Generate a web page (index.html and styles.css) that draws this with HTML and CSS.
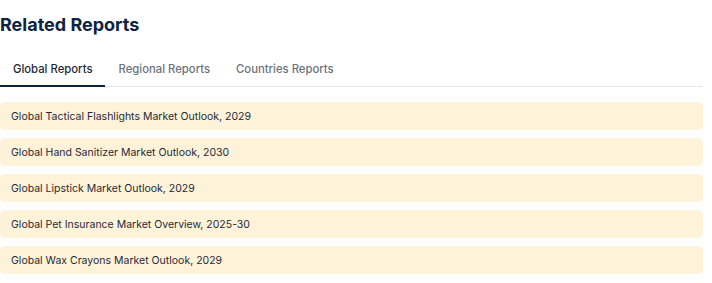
FILE: index.html
```html
<!DOCTYPE html>
<html>
<head>
  <link rel="stylesheet" href="styles.css">
</head>
<body>
  <section class="related">
    <h2 class="related-title">Related Reports</h2>
    <ul class="tabs">
      <li class="tab active">Global Reports</li>
      <li class="tab">Regional Reports</li>
      <li class="tab">Countries Reports</li>
    </ul>
    <ul class="report-list">
      <li class="report">Global Tactical Flashlights Market Outlook, 2029</li>
      <li class="report">Global Hand Sanitizer Market Outlook, 2030</li>
      <li class="report">Global Lipstick Market Outlook, 2029</li>
      <li class="report">Global Pet Insurance Market Overview, 2025-30</li>
      <li class="report">Global Wax Crayons Market Outlook, 2029</li>
    </ul>
  </section>
</body>
</html>
```

FILE: styles.css
```css
body {
  margin: 0;
  background-color: #ffffff;
  font-family: Inter, "Noto Sans", sans-serif;
}

.related {
  width: 703px;
}

.related-title {
  margin: 0;
  padding-top: 14px;
  font-size: 18px;
  line-height: 22px;
  font-weight: 700;
  color: #0d2340;
}

.tabs {
  list-style-type: none;
  margin: 16px 0 0;
  padding: 0;
  display: flex;
  border-bottom: 1px solid #e5e7eb;
}

.tab {
  padding: 8px 13px 7px;
  font-size: 11.3px;
  line-height: 18px;
  font-weight: 500;
  color: #6b7280;
  border-bottom: 2px solid transparent;
  margin-bottom: -1px;
}

.tab.active {
  color: #1f2937;
  border-bottom-color: #0d2340;
}

.report-list {
  list-style-type: none;
  margin: 15px 0 0;
  padding: 0;
  display: flex;
  flex-direction: column;
  gap: 8px;
}

.report {
  background-color: #fef3d8;
  border-radius: 5px;
  padding: 0 11px;
  height: 28px;
  display: flex;
  align-items: center;
  font-size: 10.5px;
  color: #1e293b;
}
```
